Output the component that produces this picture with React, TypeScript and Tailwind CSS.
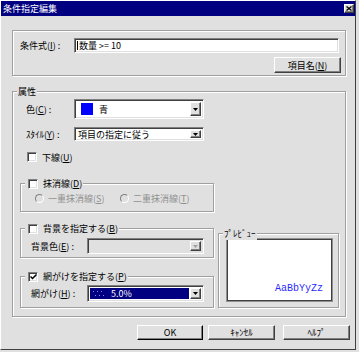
import React from 'react';

// underlined mnemonic letter
const M = ({ children }: { children: React.ReactNode }) => (
  <span className="underline underline-offset-[1px]">{children}</span>
);

const sunken =
  'border border-t-[#808080] border-l-[#808080] border-r-white border-b-white shadow-[inset_1px_1px_0_#404040,inset_-1px_-1px_0_#e0e0e0]';
const raised =
  'border border-t-white border-l-white border-r-[#404040] border-b-[#404040] shadow-[inset_-1px_-1px_0_#808080] bg-[#e0e0e0]';

const Group = ({
  className,
  caption,
  children,
}: {
  className: string;
  caption?: React.ReactNode;
  children?: React.ReactNode;
}) => (
  <div className={`relative border border-[#a0a0a0] shadow-[inset_1px_1px_0_#fff,1px_1px_0_#fff] ${className}`}>
    {caption && (
      <div className="absolute -top-[7px] left-[4px] h-[13px] bg-[#e0e0e0] px-[1px] flex items-center">{caption}</div>
    )}
    {children}
  </div>
);

const Arrow = ({ color = '#000' }: { color?: string }) => (
  <svg width="5" height="3" viewBox="0 0 5 3">
    <path d="M0 0h5L2.5 3z" fill={color} />
  </svg>
);

const DropBtn = ({ disabled }: { disabled?: boolean }) => (
  <div className={`w-[11px] h-full flex items-center justify-center ${raised}`}>
    <Arrow color={disabled ? '#a0a0a0' : '#000'} />
  </div>
);

const Combo = ({
  className,
  inner = '',
  disabled,
  children,
}: {
  className: string;
  inner?: string;
  disabled?: boolean;
  children?: React.ReactNode;
}) => (
  <div className={`flex p-[2px] ${sunken} ${disabled ? 'bg-[#e0e0e0]' : 'bg-white'} ${className}`}>
    <div className={`flex-1 flex items-center ${inner}`}>{children}</div>
    <DropBtn disabled={disabled} />
  </div>
);

const Check = ({ checked }: { checked?: boolean }) => (
  <div className={`w-[10px] h-[10px] bg-white flex items-center justify-center ${sunken}`}>
    {checked && (
      <svg width="7" height="6" viewBox="0 0 7 6">
        <path d="M0.5 2.5 L2.5 4.5 L6.5 0.5" stroke="#000" strokeWidth="1.5" fill="none" />
      </svg>
    )}
  </div>
);

const Radio = () => (
  <div className="w-[9px] h-[9px] rounded-full border border-t-[#808080] border-l-[#808080] border-r-white border-b-white bg-[#e0e0e0]" />
);

const Btn = ({ className, children }: { className: string; children: React.ReactNode }) => (
  <div className={`flex items-center justify-center ${raised} ${className}`}>{children}</div>
);

export default function App() {
  return (
    <div
      className="w-[359px] h-[352px] bg-[#e0e0e0] overflow-hidden text-[9px] leading-none text-black"
      style={{ fontFamily: '"Noto Sans CJK JP", "Noto Sans", sans-serif' }}
    >
      <div className="w-[356px] h-[350px] border border-t-white border-l-white border-r-[#404040] border-b-[#404040] bg-[#e0e0e0] flex flex-col">
        {/* Title bar */}
        <div className="h-[15px] bg-[#000080] flex items-center justify-between pl-[2px] pr-[1px] text-white">
          <span>条件指定編集</span>
          <div className={`w-[10px] h-[9px] flex items-center justify-center ${raised}`}>
            <svg width="6" height="5" viewBox="0 0 6 5">
              <path d="M0.5 0.5 L5.5 4.5 M5.5 0.5 L0.5 4.5" stroke="#000" strokeWidth="1.3" />
            </svg>
          </div>
        </div>

        <div className="flex flex-col pl-[11px]">
          {/* Condition */}
          <Group className="mt-[14px] w-[334px] h-[46px] flex flex-col">
            <div className="mt-[7px] flex items-center">
              <span className="w-[61px] pl-[7px]">
                条件式(<M>I</M>) :
              </span>
              <div className={`w-[265px] h-[15px] bg-white flex items-center pl-[2px] ${sunken}`}>
                <span className="border-l border-black pl-[1px]">数量 &gt;= 10</span>
              </div>
            </div>
            <Btn className="mt-[4px] mr-[4px] self-end w-[67px] h-[16px]">
              項目名(<M>N</M>)
            </Btn>
          </Group>

          {/* Attributes */}
          <Group className="mt-[15px] w-[334px] h-[226px] flex flex-col" caption={<span>属性</span>}>
            <div className="mt-[7px] flex items-center">
              <span className="w-[61px] pl-[13px]">
                色(<M>C</M>) :
              </span>
              <Combo className="w-[130px] h-[20px]">
                <div className="ml-[4px] w-[12px] h-[12px] bg-[#0000ff]" />
                <span className="ml-[6px]">青</span>
              </Combo>
            </div>
            <div className="mt-[8px] flex items-center">
              <span className="w-[61px] pl-[13px]">
                ｽﾀｲﾙ(<M>Y</M>) :
              </span>
              <Combo className="w-[130px] h-[14px]">
                <span className="ml-[1px]">項目の指定に従う</span>
              </Combo>
            </div>
            <div className="mt-[11px] pl-[14px] flex items-center gap-[5px]">
              <Check />
              <span>
                下線(<M>U</M>)
              </span>
            </div>

            {/* Strikethrough */}
            <Group
              className="mt-[21px] ml-[7px] w-[194px] h-[29px] flex items-start"
              caption={
                <div className="flex items-center gap-[5px] pl-[2px]">
                  <Check />
                  <span>
                    抹消線(<M>D</M>)
                  </span>
                </div>
              }
            >
              <div className="mt-[10px] pl-[14px] flex items-center text-[#909090]">
                <Radio />
                <span className="ml-[4px] w-[72px]">
                  一重抹消線(<M>S</M>)
                </span>
                <Radio />
                <span className="ml-[4px]">
                  二重抹消線(<M>T</M>)
                </span>
              </div>
            </Group>

            <div className="flex items-start">
              <div className="flex flex-col">
                {/* Background */}
                <Group
                  className="mt-[16px] ml-[7px] w-[194px] h-[30px] flex items-start"
                  caption={
                    <div className="flex items-center gap-[5px] pl-[2px]">
                      <Check />
                      <span>
                        背景を指定する(<M>B</M>)
                      </span>
                    </div>
                  }
                >
                  <div className="mt-[9px] flex items-center">
                    <span className="w-[66px] pl-[10px]">
                      背景色(<M>E</M>) :
                    </span>
                    <Combo className="w-[117px] h-[16px]" disabled />
                  </div>
                </Group>

                {/* Shading */}
                <Group
                  className="mt-[18px] ml-[7px] w-[194px] h-[32px] flex items-start"
                  caption={
                    <div className="flex items-center gap-[5px] pl-[2px]">
                      <Check checked />
                      <span>
                        網がけを指定する(<M>P</M>)
                      </span>
                    </div>
                  }
                >
                  <div className="mt-[8px] flex items-center">
                    <span className="w-[66px] pl-[10px]">
                      網がけ(<M>H</M>) :
                    </span>
                    <Combo className="w-[117px] h-[17px]" inner="bg-[#000080] text-white mr-[1px]">
                      <svg width="11" height="8" viewBox="0 0 11 8" className="ml-[3px]">
                        {[0, 4, 8].map((x) =>
                          [0, 4].map((y) => (
                            <rect key={`${x}-${y}`} x={x + (y === 4 ? 2 : 0)} y={y + 1} width="1" height="1" fill="#8080ff" />
                          )),
                        )}
                      </svg>
                      <span className="ml-[7px]">5.0%</span>
                    </Combo>
                  </div>
                </Group>
              </div>

              {/* Preview */}
              <Group
                className="mt-[21px] ml-[4px] w-[121px] h-[75px] flex flex-col"
                caption={<span>ﾌﾟﾚﾋﾞｭｰ</span>}
              >
                <div className="mt-[5px] ml-[8px] w-[105px] h-[62px] bg-white border border-[#404040] shadow-[0_0_0_1px_#909090] flex items-end justify-end pr-[8px] pb-[6px]">
                  <span
                    className="text-[10px] text-[#2a2aff]"
                    style={{ fontFamily: '"Liberation Mono", monospace' }}
                  >
                    AaBbYyZz
                  </span>
                </div>
              </Group>
            </div>
          </Group>

          {/* Buttons */}
          <div className="mt-[8px] flex">
            <Btn className="ml-[125px] w-[66px] h-[15px] border-r-black border-b-black">OK</Btn>
            <Btn className="ml-[5px] w-[67px] h-[15px]">ｷｬﾝｾﾙ</Btn>
            <Btn className="ml-[8px] w-[67px] h-[15px]">ﾍﾙﾌﾟ</Btn>
          </div>
        </div>
      </div>
    </div>
  );
}
